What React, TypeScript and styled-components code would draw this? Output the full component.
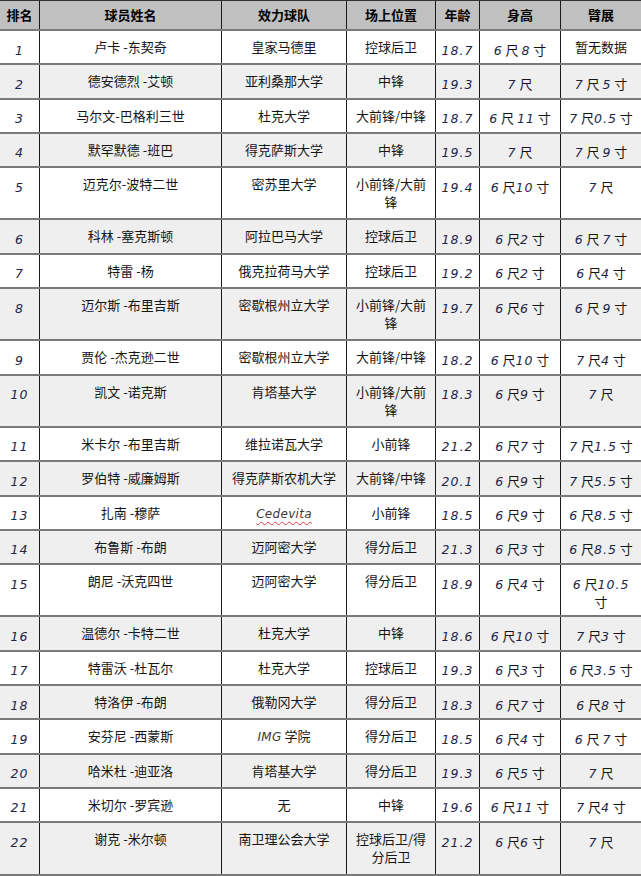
import React from "react";
import styled, { createGlobalStyle, css } from "styled-components";

const GlobalStyle = createGlobalStyle`
  html, body { margin: 0; padding: 0; background: #ffffff; }
  body {
    font-family: "Noto Sans CJK SC", "Noto Sans", sans-serif;
    color: #111111;
    -webkit-font-smoothing: antialiased;
  }
`;

const Table = styled.div`
  width: 641px;
  display: flex;
  flex-direction: column;
  border-top: 1px solid #333333;
`;

const Row = styled.div<{ $striped?: boolean; $head?: boolean }>`
  display: grid;
  grid-template-columns: 40px 182px 125px 89px 44px 81px 80px;
  border-bottom: 2px solid #7a7a7a;
  background: ${(p) => (p.$head ? "#c0c0c0" : p.$striped ? "#efefef" : "#ffffff")};
`;

const HeadCell = styled.div`
  box-sizing: border-box;
  height: 28px;
  padding: 5px 2px;
  line-height: 18px;
  font-size: 13px;
  font-weight: 700;
  text-align: center;
  color: #000000;
  border-right: 1px solid #1a1a1a;
  &:last-child { border-right: none; }
`;

const Cell = styled.div<{ $num?: boolean }>`
  box-sizing: border-box;
  padding: ${(p) => (p.$num ? "9.5px 2px 4.8px" : "7px 2px 7.3px")};
  line-height: 18px;
  font-size: 13px;
  text-align: center;
  white-space: pre-line;
  color: #151515;
  border-right: 1px solid #1a1a1a;
  overflow: hidden;
  &:last-child { border-right: none; }
`;

const Num = styled.span`
  font-family: "DejaVu Sans", sans-serif;
  font-style: italic;
  font-size: 12.5px;
  line-height: 10px;
  letter-spacing: 1px;
  color: #1e2548;
`;

const Latin = styled.span<{ $spell?: boolean }>`
  font-family: "DejaVu Sans", sans-serif;
  font-style: italic;
  font-size: 12px;
  line-height: 10px;
  letter-spacing: 0.3px;
  color: #3a3a3a;
  ${(p) =>
    p.$spell &&
    css`
      text-decoration: underline wavy #e03a3a;
      text-decoration-thickness: 1px;
      text-underline-offset: 3px;
    `}
`;

type Player = [string, string, string, string, string, string, string];

const players: Player[] = [
  ["1", "卢卡 -东契奇", "皇家马德里", "控球后卫", "18.7", "6 尺 8 寸", "暂无数据"],
  ["2", "德安德烈 -艾顿", "亚利桑那大学", "中锋", "19.3", "7 尺", "7 尺 5 寸"],
  ["3", "马尔文-巴格利三世", "杜克大学", "大前锋/中锋", "18.7", "6 尺 11 寸", "7 尺0.5 寸"],
  ["4", "默罕默德 -班巴", "得克萨斯大学", "中锋", "19.5", "7 尺", "7 尺 9 寸"],
  ["5", "迈克尔-波特二世", "密苏里大学", "小前锋/大前\n锋", "19.4", "6 尺10 寸", "7 尺"],
  ["6", "科林 -塞克斯顿", "阿拉巴马大学", "控球后卫", "18.9", "6 尺2 寸", "6 尺 7 寸"],
  ["7", "特雷 -杨", "俄克拉荷马大学", "控球后卫", "19.2", "6 尺2 寸", "6 尺4 寸"],
  ["8", "迈尔斯 -布里吉斯", "密歇根州立大学", "小前锋/大前\n锋", "19.7", "6 尺6 寸", "6 尺 9 寸"],
  ["9", "贾伦 -杰克逊二世", "密歇根州立大学", "大前锋/中锋", "18.2", "6 尺10 寸", "7 尺4 寸"],
  ["10", "凯文 -诺克斯", "肯塔基大学", "小前锋/大前\n锋", "18.3", "6 尺9 寸", "7 尺"],
  ["11", "米卡尔 -布里吉斯", "维拉诺瓦大学", "小前锋", "21.2", "6 尺7 寸", "7 尺1.5 寸"],
  ["12", "罗伯特 -威廉姆斯", "得克萨斯农机大学", "大前锋/中锋", "20.1", "6 尺9 寸", "7 尺5.5 寸"],
  ["13", "扎南 -穆萨", "Cedevita", "小前锋", "18.5", "6 尺9 寸", "6 尺8.5 寸"],
  ["14", "布鲁斯 -布朗", "迈阿密大学", "得分后卫", "21.3", "6 尺3 寸", "6 尺8.5 寸"],
  ["15", "朗尼 -沃克四世", "迈阿密大学", "得分后卫", "18.9", "6 尺4 寸", "6 尺10.5\n寸"],
  ["16", "温德尔 -卡特二世", "杜克大学", "中锋", "18.6", "6 尺10 寸", "7 尺3 寸"],
  ["17", "特雷沃 -杜瓦尔", "杜克大学", "控球后卫", "19.3", "6 尺3 寸", "6 尺3.5 寸"],
  ["18", "特洛伊 -布朗", "俄勒冈大学", "得分后卫", "18.3", "6 尺7 寸", "6 尺8 寸"],
  ["19", "安芬尼 -西蒙斯", "IMG 学院", "得分后卫", "18.5", "6 尺4 寸", "6 尺 7 寸"],
  ["20", "哈米杜 -迪亚洛", "肯塔基大学", "得分后卫", "19.3", "6 尺5 寸", "7 尺"],
  ["21", "米切尔 -罗宾逊", "无", "中锋", "19.6", "6 尺11 寸", "7 尺4 寸"],
  ["22", "谢克 -米尔顿", "南卫理公会大学", "控球后卫/得\n分后卫", "21.2", "6 尺6 寸", "7 尺"],
];

const headers = ["排名", "球员姓名", "效力球队", "场上位置", "年龄", "身高", "臂展"];

function renderText(text: string): React.ReactNode {
  if (text === "Cedevita") return <Latin $spell>{text}</Latin>;
  const parts = text.split(/([0-9.]+|[A-Za-z]+)/);
  return parts.map((part, i) => {
    if (part === "") return null;
    if (/^[0-9.]+$/.test(part)) return <Num key={i}>{part}</Num>;
    if (/^[A-Za-z]+$/.test(part)) return <Latin key={i}>{part}</Latin>;
    return <React.Fragment key={i}>{part}</React.Fragment>;
  });
}

export default function App() {
  return (
    <>
      <GlobalStyle />
      <Table>
        <Row $head>
          {headers.map((h) => (
            <HeadCell key={h}>{h}</HeadCell>
          ))}
        </Row>
        {players.map((p, idx) => (
          <Row key={p[0]} $striped={idx % 2 === 1}>
            {p.map((v, ci) => (
              <Cell key={ci} $num={/[0-9]/.test(v) && ci !== 2}>
                {renderText(v)}
              </Cell>
            ))}
          </Row>
        ))}
      </Table>
    </>
  );
}
